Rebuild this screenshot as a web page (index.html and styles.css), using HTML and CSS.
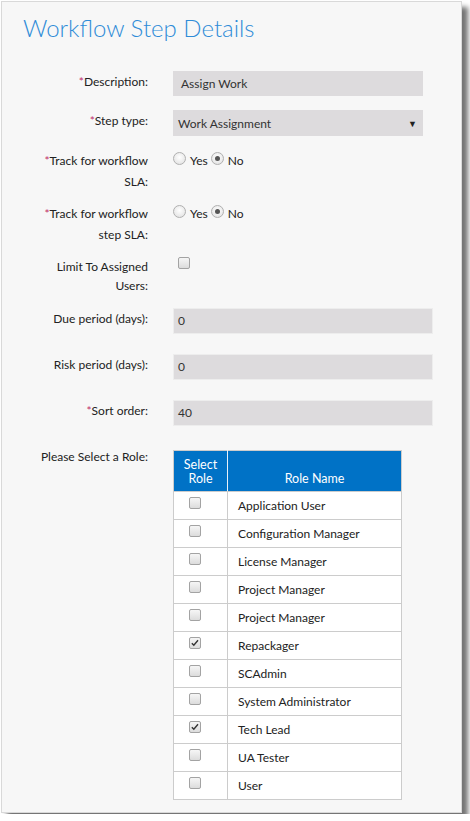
FILE: index.html
```html
<!DOCTYPE html>
<html>
<head>
<meta charset="utf-8">
<link rel="stylesheet" href="styles.css">
</head>
<body>
<div class="panel">
  <h1 class="title">Workflow Step Details</h1>
  <div class="form">
    <div class="row r1">
      <div class="label"><span class="req">*</span>Description:</div>
      <div class="field"><div class="input">Assign Work</div></div>
    </div>
    <div class="row r2">
      <div class="label"><span class="req">*</span>Step type:</div>
      <div class="field"><div class="select"><span>Work Assignment</span><span class="arrow">▼</span></div></div>
    </div>
    <div class="row r3">
      <div class="label"><span class="req">*</span>Track for workflow<br>SLA:</div>
      <div class="field radios"><span class="radio"></span><span class="rtext">Yes</span><span class="radio checked"></span><span class="rtext">No</span></div>
    </div>
    <div class="row r3">
      <div class="label"><span class="req">*</span>Track for workflow<br>step SLA:</div>
      <div class="field radios"><span class="radio"></span><span class="rtext">Yes</span><span class="radio checked"></span><span class="rtext">No</span></div>
    </div>
    <div class="row r5">
      <div class="label two">Limit To Assigned<br>Users:</div>
      <div class="field"><span class="cb single"></span></div>
    </div>
    <div class="row r6">
      <div class="label">Due period (days):</div>
      <div class="field"><div class="input num">0</div></div>
    </div>
    <div class="row r6">
      <div class="label">Risk period (days):</div>
      <div class="field"><div class="input num">0</div></div>
    </div>
    <div class="row r6">
      <div class="label"><span class="req">*</span>Sort order:</div>
      <div class="field"><div class="input num">40</div></div>
    </div>
    <div class="row r9">
      <div class="label">Please Select a Role:</div>
      <div class="field">
        <table class="roles">
          <thead>
            <tr><th class="sel">Select<br>Role</th><th class="rn">Role Name</th></tr>
          </thead>
          <tbody>
            <tr><td class="cbcell"><span class="cb"></span></td><td class="name">Application User</td></tr>
            <tr><td class="cbcell"><span class="cb"></span></td><td class="name">Configuration Manager</td></tr>
            <tr><td class="cbcell"><span class="cb"></span></td><td class="name">License Manager</td></tr>
            <tr><td class="cbcell"><span class="cb"></span></td><td class="name">Project Manager</td></tr>
            <tr><td class="cbcell"><span class="cb"></span></td><td class="name">Project Manager</td></tr>
            <tr><td class="cbcell"><span class="cb checked"><svg viewBox="0 0 12 12" width="10" height="10"><path d="M2.2 6.2 L4.6 8.6 L9.6 2.8" fill="none" stroke="#333" stroke-width="1.7"/></svg></span></td><td class="name">Repackager</td></tr>
            <tr><td class="cbcell"><span class="cb"></span></td><td class="name">SCAdmin</td></tr>
            <tr><td class="cbcell"><span class="cb"></span></td><td class="name">System Administrator</td></tr>
            <tr><td class="cbcell"><span class="cb checked"><svg viewBox="0 0 12 12" width="10" height="10"><path d="M2.2 6.2 L4.6 8.6 L9.6 2.8" fill="none" stroke="#333" stroke-width="1.7"/></svg></span></td><td class="name">Tech Lead</td></tr>
            <tr><td class="cbcell"><span class="cb"></span></td><td class="name">UA Tester</td></tr>
            <tr><td class="cbcell"><span class="cb"></span></td><td class="name">User</td></tr>
          </tbody>
        </table>
      </div>
    </div>
  </div>
</div>
</body>
</html>
```
FILE: styles.css
```css
html, body {
  margin: 0;
  background: #ffffff;
}
body {
  padding: 1px;
  font-family: Lato, "Open Sans", sans-serif;
  font-size: 12px;
  color: #222;
}
.panel {
  width: 459px;
  height: 810px;
  border: 1px solid #d9d9d9;
  background: #f7f7f7;
  box-shadow: 6px 6px 5px rgba(0, 0, 0, 0.55);
}
.title {
  margin: 0;
  padding: 11px 0 0 21px;
  font-weight: 300;
  font-size: 24px;
  line-height: 29px;
  color: #2f8cd8;
}
.form {
  margin-top: 29px;
  margin-left: 18px;
}
.row {
  display: grid;
  grid-template-columns: 128px auto;
  column-gap: 25px;
  align-items: start;
}
.r1 { margin-bottom: 14px; }
.r2 { margin-bottom: 14px; }
.r3 { margin-bottom: 11px; }
.r5 { margin-bottom: 13px; }
.r6 { margin-bottom: 20px; }
.label {
  text-align: right;
  line-height: 21px;
}
.label.two {
  line-height: 19px;
  padding-top: 1px;
}
.req {
  color: #c0306a;
}
.input {
  box-sizing: border-box;
  width: 250px;
  height: 25px;
  line-height: 25px;
  padding: 0 8px;
  background: #dddbdd;
  color: #333;
}
.input.num {
  width: 260px;
  height: 26px;
  line-height: 24px;
  border: 1px solid #ededed;
  padding-left: 4px;
}
.select {
  box-sizing: border-box;
  width: 250px;
  height: 26px;
  display: flex;
  align-items: center;
  justify-content: space-between;
  padding: 0 6px 0 5px;
  background: #dddbdd;
  color: #333;
}
.arrow {
  font-size: 9px;
  color: #222;
}
.radios {
  display: flex;
  align-items: center;
  height: 21px;
}
.radio {
  box-sizing: border-box;
  width: 13px;
  height: 13px;
  border-radius: 50%;
  border: 1px solid #b0b0b0;
  background: radial-gradient(circle at 50% 40%, #ffffff, #dedede);
  margin-right: 4px;
  margin-top: -4px;
  position: relative;
}
.radio.checked::after {
  content: "";
  position: absolute;
  left: 3px;
  top: 3px;
  width: 5px;
  height: 5px;
  border-radius: 50%;
  background: #555;
}
.rtext {
  margin-right: 3px;
}
.cb {
  display: inline-flex;
  align-items: center;
  justify-content: center;
  box-sizing: border-box;
  width: 12px;
  height: 12px;
  border: 1px solid #a3a3a3;
  border-radius: 2px;
  background: linear-gradient(#f6f6f6, #dcdcdc);
  vertical-align: top;
}
.cb.single {
  margin: 1px 0 0 5px;
}
.roles {
  border-collapse: collapse;
  width: 229px;
  margin-top: 4px;
  background: #fff;
  font-size: 12px;
}
.roles th {
  background: #0072c6;
  color: #fff;
  font-weight: normal;
  font-size: 12.5px;
  height: 41px;
  padding: 0 0 5px 0;
  line-height: 14px;
  vertical-align: bottom;
  border: 1px solid #ccc;
  box-sizing: border-box;
}
.roles th.sel {
  width: 54px;
  border-right: 1px solid #e8f1f9;
}
.roles td {
  border: 1px solid #ccc;
  height: 28px;
  padding: 0;
  box-sizing: border-box;
  color: #222;
}
.roles td.cbcell {
  text-align: left;
  vertical-align: top;
  padding: 5px 0 0 15px;
}
.roles td.name {
  padding-left: 10px;
}
```
